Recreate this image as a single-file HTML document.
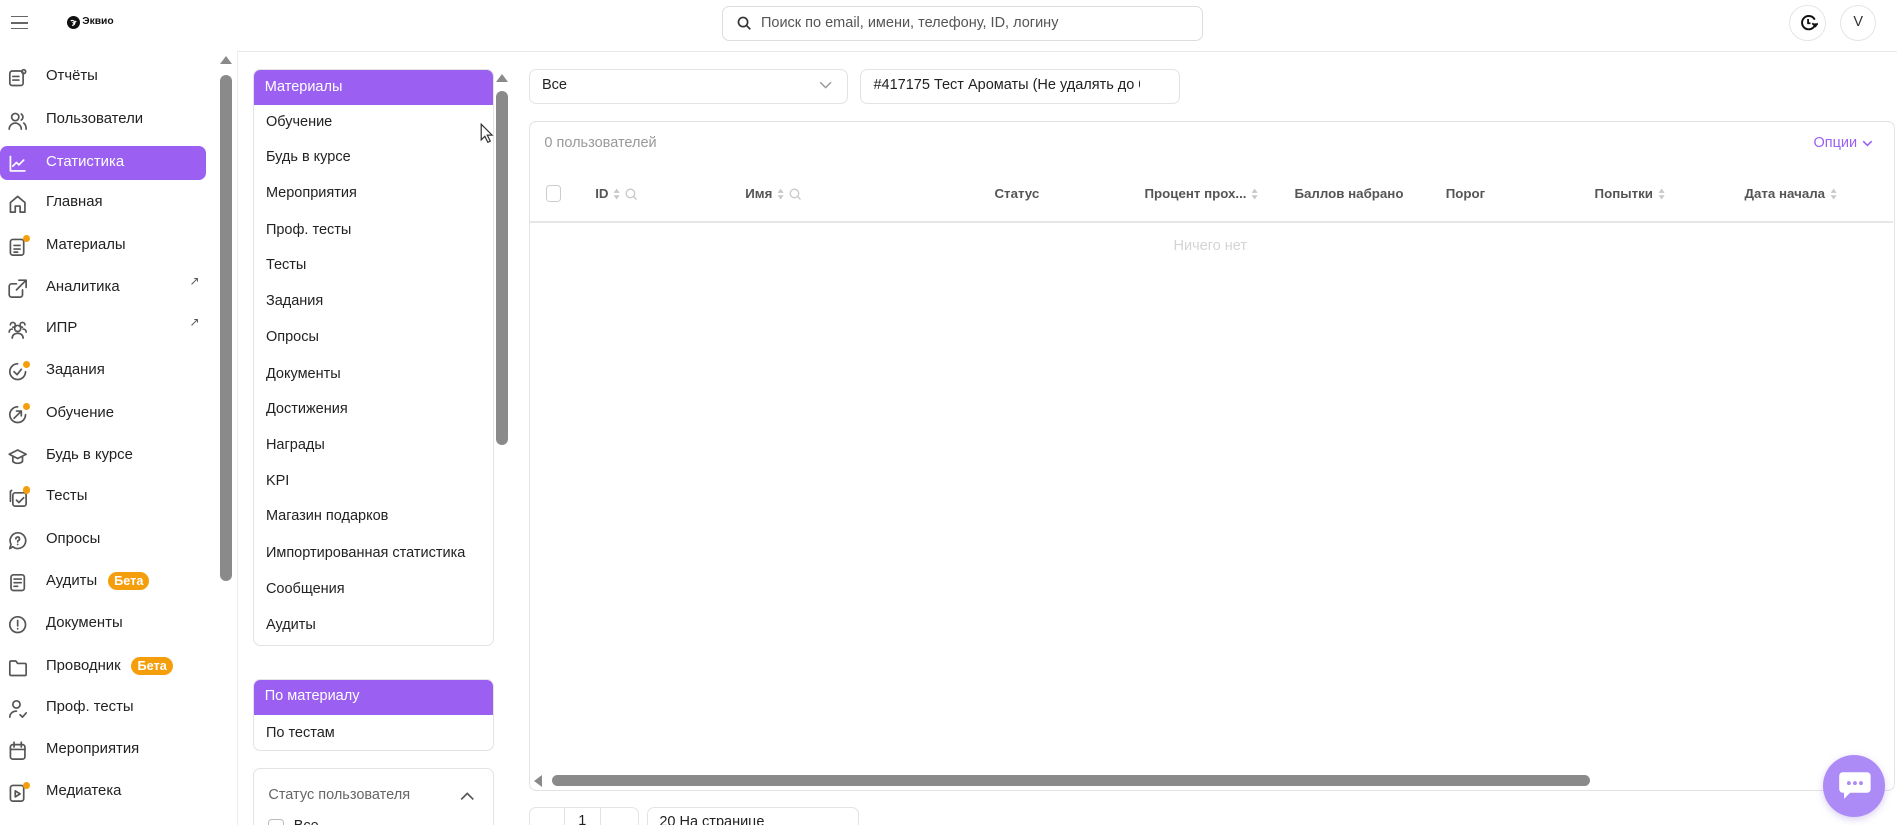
<!DOCTYPE html>
<html><head><meta charset="utf-8">
<style>
*{box-sizing:border-box;margin:0;padding:0}
html,body{width:1897px;height:825px;overflow:hidden;background:#fff}
#w{zoom:1.2098;width:1568px;height:682px;position:relative;font-family:"Liberation Sans",Arial,sans-serif;font-size:12px;color:#222;overflow:hidden}
.a{position:absolute}
.ic{position:absolute;left:7px;width:16px;height:16px}
.ic svg{width:16px;height:16px;fill:none;stroke:#555;stroke-width:1.4;stroke-linecap:round;stroke-linejoin:round}
.dot{position:absolute;width:6px;height:6px;border-radius:50%;background:#f59e0b;left:12px;top:-1px}
.si{position:absolute;left:0;width:170px;height:28px;line-height:28px;padding-left:38px;font-size:12.3px;color:#222}
.si.act{background:#9b5ff2;color:#fff;border-radius:6px}
.si.act svg{stroke:#fff}
.beta{display:inline-block;background:#f59e0b;color:#fff;border-radius:8px;font-size:10.5px;line-height:15px;padding:0 5px;margin-left:9px;font-weight:bold}
.ext{position:absolute;right:5px;top:-5px;font-size:10px;color:#555}
.li{position:absolute;left:0;width:198px;height:29px;line-height:29px;padding-left:10px;font-size:12px}
.th{position:absolute;top:153px;font-size:11px;color:#555;font-weight:bold;display:flex;align-items:center;height:14px}
.th svg{margin-left:4px}
.bx{border:1px solid #e3e3e3;border-radius:6px;background:#fff}
</style></head><body><div id="w">
<svg width="0" height="0" style="position:absolute"><defs>
<symbol id="srt" viewBox="0 0 6 10"><path d="M3 0.5L5.5 4h-5zM3 9.5L5.5 6h-5z" fill="#c8c8c8"/></symbol>
<symbol id="mag" viewBox="0 0 10 10"><circle cx="4.5" cy="4.5" r="3.5" fill="none" stroke="#c8c8c8" stroke-width="1.1"/><path d="M7 7l2.5 2.5" stroke="#c8c8c8" stroke-width="1.1"/></symbol>
</defs></svg>
<!-- topbar -->
<div class="a" style="left:9px;top:13px;width:14px;height:11px;border-top:1.5px solid #666;border-bottom:1.5px solid #666"></div>
<div class="a" style="left:9px;top:18px;width:14px;height:1.5px;background:#666"></div>
<div class="a" style="left:55px;top:13px;width:11px;height:11px;border-radius:50%;background:#111"></div>
<svg class="a" style="left:57px;top:15px" width="7" height="7" viewBox="0 0 7 7"><path d="M1.5 2.5a2 2 0 1 1 1 3.5M3 3.5l1 1 2-2" fill="none" stroke="#fff" stroke-width="1"/></svg>
<div class="a" style="left:68px;top:13px;font-size:8.5px;color:#111;font-weight:bold">Эквио</div>
<div class="a bx" style="left:597px;top:5px;width:397px;height:29px;border-color:#ddd"></div>
<svg class="a" style="left:609px;top:13px" width="12" height="12" viewBox="0 0 12 12"><circle cx="5" cy="5" r="3.8" fill="none" stroke="#333" stroke-width="1.4"/><path d="M8 8l3 3" stroke="#333" stroke-width="1.4"/></svg>
<div class="a" style="left:629px;top:12px;color:#555;font-size:12px">Поиск по email, имени, телефону, ID, логину</div>
<div class="a" style="left:1479px;top:4px;width:30px;height:30px;border:1px solid #e5e5e5;border-radius:50%"></div>
<svg class="a" style="left:1487px;top:11px" width="16" height="16" viewBox="0 0 16 16"><path d="M13.5 8.5A5.5 5.5 0 1 1 8 2.5a5.5 5.5 0 0 1 5 3" fill="none" stroke="#111" stroke-width="1.6"/><path d="M7.5 5v3.5h2" fill="none" stroke="#111" stroke-width="1.5"/><path d="M11 8.5l2.5 2.5L15.5 8.5" fill="none" stroke="#111" stroke-width="1.5"/></svg>
<div class="a" style="left:1521px;top:4px;width:30px;height:30px;border:1px solid #e5e5e5;border-radius:50%;text-align:center;line-height:28px;font-size:12px;color:#333">V</div>
<div class="a" style="left:196px;top:42px;width:1372px;height:1px;background:#e8e8e8"></div>
<div class="a" style="left:196px;top:42px;width:1px;height:640px;background:#ececec"></div>

<!-- sidebar -->
<div class="a" style="left:0;top:0;width:180px;height:682px">
<div class="si" style="top:50px"><span class="ic" style="top:6px"><svg viewBox="0 0 16 16"><rect x="1.5" y="2.5" width="11" height="12" rx="2"/><path d="M4 7h5M4 10h5"/><circle cx="13" cy="3" r="1.6"/></svg></span>Отчёты</div>
<div class="si" style="top:85px"><span class="ic" style="top:6px"><svg viewBox="0 0 16 16"><circle cx="6" cy="5" r="3"/><path d="M1 15c0-3 2.5-5 5-5s5 2 5 5M11 2.5a3 3 0 0 1 0 5M13 10c1.5 1 2 3 2 5"/></svg></span>Пользователи</div>
<div class="si act" style="top:121px"><span class="ic" style="top:6px"><svg viewBox="0 0 16 16"><path d="M2 2v12h12M4 10l3-3 2 2 4-4"/></svg></span>Статистика</div>
<div class="si" style="top:154px"><span class="ic" style="top:6px"><svg viewBox="0 0 16 16"><path d="M2 15V7l6-5 6 5v8h-4v-5H6v5z"/></svg></span>Главная</div>
<div class="si" style="top:189px"><span class="ic" style="top:6px"><svg viewBox="0 0 16 16"><rect x="2" y="2" width="11" height="13" rx="2"/><path d="M5 7h5M5 10h5M5 12.5h3"/></svg><span class="dot"></span></span>Материалы</div>
<div class="si" style="top:224px"><span class="ic" style="top:6px"><svg viewBox="0 0 16 16"><path d="M12 9v4a2 2 0 0 1-2 2H3a2 2 0 0 1-2-2V6a2 2 0 0 1 2-2h4M9 1h6v6M15 1L7 9"/></svg></span>Аналитика<span class="ext">↗</span></div>
<div class="si" style="top:258px"><span class="ic" style="top:6px"><svg viewBox="0 0 16 16"><circle cx="8" cy="7" r="2.5"/><path d="M3.5 15c0-2.5 2-4 4.5-4s4.5 1.5 4.5 4M2 4a2 2 0 1 1 2 2M14 4a2 2 0 1 0-2 2M1 10c0-1.5 1-2.5 2.5-2.5M15 10c0-1.5-1-2.5-2.5-2.5"/></svg></span>ИПР<span class="ext">↗</span></div>
<div class="si" style="top:293px"><span class="ic" style="top:6px"><svg viewBox="0 0 16 16"><path d="M14.5 8A6.5 6.5 0 1 1 8 1.5"/><path d="M5 8l2.5 2.5L11 6"/></svg><span class="dot"></span></span>Задания</div>
<div class="si" style="top:328px"><span class="ic" style="top:6px"><svg viewBox="0 0 16 16"><path d="M14.5 8A6.5 6.5 0 1 1 8 1.5"/><path d="M5 11l6-6M7 5h4v4"/></svg><span class="dot"></span></span>Обучение</div>
<div class="si" style="top:363px"><span class="ic" style="top:6px"><svg viewBox="0 0 16 16"><path d="M1 6l7-3.5L15 6l-7 3.5zM4 8v4c2 2 6 2 8 0V8"/></svg></span>Будь в курсе</div>
<div class="si" style="top:397px"><span class="ic" style="top:6px"><svg viewBox="0 0 16 16"><rect x="4" y="4" width="11" height="11" rx="2"/><path d="M2 11V3a2 2 0 0 1 1-1M7 10l2 2 4-4"/></svg><span class="dot"></span></span>Тесты</div>
<div class="si" style="top:432px"><span class="ic" style="top:6px"><svg viewBox="0 0 16 16"><path d="M8 1.5a6.5 6.5 0 1 1-4 11.5L1.5 14.5 2.5 11A6.5 6.5 0 0 1 8 1.5z"/><path d="M6.5 6.5a1.5 1.5 0 1 1 2 1.4c-.5.2-.5.6-.5 1.1M8 11v.2"/></svg></span>Опросы</div>
<div class="si" style="top:467px"><span class="ic" style="top:6px"><svg viewBox="0 0 16 16"><rect x="2.5" y="1.5" width="11" height="13" rx="2"/><path d="M5 5h6M5 8h6M5 11h3"/></svg></span>Аудиты<span class="beta">Бета</span></div>
<div class="si" style="top:502px"><span class="ic" style="top:6px"><svg viewBox="0 0 16 16"><circle cx="8" cy="8" r="6.5"/><path d="M8 4.5v4.5M8 11.3v.2"/></svg></span>Документы</div>
<div class="si" style="top:537px"><span class="ic" style="top:6px"><svg viewBox="0 0 16 16"><path d="M1.5 3.5a1 1 0 0 1 1-1h4l1.5 2h6a1 1 0 0 1 1 1v8a1 1 0 0 1-1 1h-11.5a1 1 0 0 1-1-1z"/></svg></span>Проводник<span class="beta">Бета</span></div>
<div class="si" style="top:571px"><span class="ic" style="top:6px"><svg viewBox="0 0 16 16"><circle cx="7" cy="4.5" r="3"/><path d="M1.5 15c0-3 2.5-5 5.5-5M10 13l2 2 3-3.5"/></svg></span>Проф. тесты</div>
<div class="si" style="top:606px"><span class="ic" style="top:6px"><svg viewBox="0 0 16 16"><rect x="2" y="3" width="12" height="12" rx="2"/><path d="M2 7h12M5 1v4M11 1v4"/></svg></span>Мероприятия</div>
<div class="si" style="top:641px"><span class="ic" style="top:6px"><svg viewBox="0 0 16 16"><rect x="2" y="2" width="11" height="13" rx="2"/><path d="M6 6.5v5l4-2.5z"/></svg><span class="dot"></span></span>Медиатека</div>
</div>
<div class="a" style="left:182px;top:46px;width:0;height:0;border-left:5px solid transparent;border-right:5px solid transparent;border-bottom:7px solid #8a8a8a"></div>
<div class="a" style="left:182px;top:62px;width:10px;height:418px;background:#8a8a8a;border-radius:5px"></div>

<!-- materials list -->
<div class="a bx" style="left:209px;top:57px;width:199px;height:477px;overflow:hidden">
<div class="li" style="top:0;height:29px;background:#9b5ff2;color:#fff;left:-1px;width:199px">Материалы</div>
<div class="li" style="top:29px">Обучение</div>
<div class="li" style="top:58px">Будь в курсе</div>
<div class="li" style="top:88px">Мероприятия</div>
<div class="li" style="top:118px">Проф. тесты</div>
<div class="li" style="top:147px">Тесты</div>
<div class="li" style="top:177px">Задания</div>
<div class="li" style="top:207px">Опросы</div>
<div class="li" style="top:237px">Документы</div>
<div class="li" style="top:266px">Достижения</div>
<div class="li" style="top:296px">Награды</div>
<div class="li" style="top:326px">KPI</div>
<div class="li" style="top:355px">Магазин подарков</div>
<div class="li" style="top:385px">Импортированная статистика</div>
<div class="li" style="top:415px">Сообщения</div>
<div class="li" style="top:445px">Аудиты</div>
</div>
<svg class="a" style="left:397px;top:102px" width="12" height="17" viewBox="0 0 12 17"><path d="M1 1v13l3-3 2.5 5 2-1-2.5-5h4z" fill="#fff" stroke="#333" stroke-width="1"/></svg>
<div class="a" style="left:410px;top:61px;width:0;height:0;border-left:5px solid transparent;border-right:5px solid transparent;border-bottom:7px solid #8a8a8a"></div>
<div class="a" style="left:410px;top:75px;width:10px;height:293px;background:#8a8a8a;border-radius:5px"></div>

<div class="a bx" style="left:209px;top:561px;width:199px;height:60px;overflow:hidden">
<div class="li" style="top:-1px;left:-1px;width:199px;height:30px;line-height:30px;background:#9b5ff2;color:#fff">По материалу</div>
<div class="li" style="top:29px;line-height:30px">По тестам</div>
</div>
<div class="a bx" style="left:209px;top:635px;width:199px;height:60px">
<div class="a" style="left:12px;top:15px;color:#666;font-size:12px">Статус пользователя</div>
<svg class="a" style="left:170px;top:18px" width="12" height="8" viewBox="0 0 12 8"><path d="M1 7l5-5 5 5" fill="none" stroke="#555" stroke-width="1.4"/></svg>
<div class="a" style="left:12px;top:41px;width:13px;height:13px;border:1px solid #bbb;border-radius:3px"></div>
<div class="a" style="left:33px;top:40px">Все</div>
</div>

<!-- filters -->
<div class="a bx" style="left:437px;top:57px;width:264px;height:29px"></div>
<div class="a" style="left:448px;top:64px">Все</div>
<svg class="a" style="left:677px;top:67px" width="11" height="7" viewBox="0 0 11 7"><path d="M1 1l4.5 4.5L10 1" fill="none" stroke="#999" stroke-width="1.2"/></svg>
<div class="a bx" style="left:711px;top:57px;width:264px;height:29px"></div>
<div class="a" style="left:722px;top:64px;width:220px;overflow:hidden;white-space:nowrap;font-size:12px">#417175 Тест Ароматы (Не удалять до 04</div>

<!-- table -->
<div class="a bx" style="left:437px;top:100px;width:1129px;height:554px;border-radius:6px"></div>
<div class="a" style="left:450px;top:112px;color:#999;font-size:12px">0 пользователей</div>
<div class="a" style="left:1499px;top:112px;color:#9b5ff2;font-size:12px">Опции</div>
<svg class="a" style="left:1539px;top:116px" width="9" height="6" viewBox="0 0 9 6"><path d="M1 1l3.5 3.5L8 1" fill="none" stroke="#9b5ff2" stroke-width="1.3"/></svg>
<div class="a" style="left:451px;top:153px;width:13px;height:14px;border:1px solid #ccc;border-radius:3px"></div>
<div class="th" style="left:492px">ID<svg width="6" height="10"><use href="#srt"/></svg><svg width="10" height="10"><use href="#mag"/></svg></div>
<div class="th" style="left:616px">Имя<svg width="6" height="10"><use href="#srt"/></svg><svg width="10" height="10"><use href="#mag"/></svg></div>
<div class="th" style="left:822px">Статус</div>
<div class="th" style="left:946px">Процент прох...<svg width="6" height="10"><use href="#srt"/></svg></div>
<div class="th" style="left:1070px">Баллов набрано</div>
<div class="th" style="left:1195px">Порог</div>
<div class="th" style="left:1318px">Попытки<svg width="6" height="10"><use href="#srt"/></svg></div>
<div class="th" style="left:1442px">Дата начала<svg width="6" height="10"><use href="#srt"/></svg></div>
<div class="a" style="left:438px;top:183px;width:1127px;height:1px;background:#e6e6e6"></div>
<div class="a" style="left:970px;top:197px;color:#d4d4d4;font-size:12px">Ничего нет</div>
<div class="a" style="left:441px;top:641px;width:0;height:0;border-top:5px solid transparent;border-bottom:5px solid transparent;border-right:7px solid #8a8a8a"></div>
<div class="a" style="left:456px;top:641px;width:858px;height:9px;background:#8a8a8a;border-radius:5px"></div>

<!-- pagination -->
<div class="a bx" style="left:437px;top:667px;width:91px;height:30px"></div>
<div class="a" style="left:466px;top:667px;width:1px;height:20px;background:#e3e3e3"></div>
<div class="a" style="left:496px;top:667px;width:1px;height:20px;background:#e3e3e3"></div>
<div class="a" style="left:478px;top:672px">1</div>
<div class="a bx" style="left:535px;top:667px;width:175px;height:30px"></div>
<div class="a" style="left:545px;top:673px">20 На странице</div>

<!-- chat -->
<div class="a" style="left:1507px;top:624px;width:51px;height:51px;border-radius:50%;background:#ad8bf7;box-shadow:0 2px 6px rgba(150,120,220,.35)"></div>
<svg class="a" style="left:1519px;top:637px" width="28" height="25" viewBox="0 0 28 25"><path d="M4 1h20a3 3 0 0 1 3 3v11a3 3 0 0 1-3 3H10l-5 5v-5H4a3 3 0 0 1-3-3V4a3 3 0 0 1 3-3z" fill="#fff"/><circle cx="9" cy="10" r="1.6" fill="#ad8bf7"/><circle cx="14" cy="10" r="1.6" fill="#ad8bf7"/><circle cx="19" cy="10" r="1.6" fill="#ad8bf7"/></svg>
</div></body></html>
